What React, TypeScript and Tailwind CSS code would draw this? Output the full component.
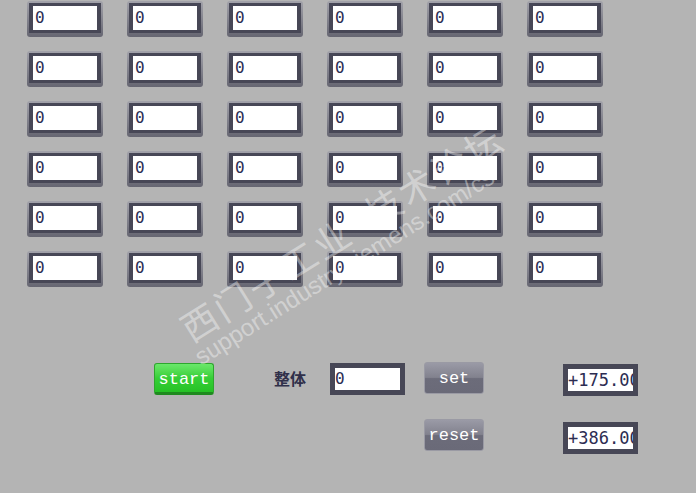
function Cell() {
  return (
    <div className="w-[76px] h-[36px] rounded-[3px] bg-gradient-to-b from-[#a2a2aa] to-[#666672] pt-[2px] px-[2px] pb-[4px]">
      <div className="h-full bg-[#474756] px-[4px] py-[3px]">
        <div className="h-full bg-white flex items-center pl-[2px] text-[16px] text-[#2c2c52] leading-none font-['DejaVu_Sans_Mono',monospace]">
          0
        </div>
      </div>
    </div>
  );
}

function GrayButton({ label }: { label: string }) {
  return (
    <button className="w-[60px] h-[32px] rounded-[3px] border border-[#9a9aa4] bg-[linear-gradient(#9a9aa6_0%,#82828e_48%,#6c6c7a_52%,#6a6a78_100%)] text-white text-[17px] leading-none font-['Liberation_Mono',monospace] flex items-center justify-center">
      {label}
    </button>
  );
}

function ValueBox({ value, size = "text-[16px]" }: { value: string; size?: string }) {
  return (
    <div className="w-[75px] h-[32px] bg-[#474756] p-[5px]">
      <div className={`h-full bg-white overflow-hidden whitespace-nowrap flex items-center ${size} text-[#2c2c52] leading-none font-['DejaVu_Sans_Mono',monospace]`}>
        {value}
      </div>
    </div>
  );
}

export default function App() {
  return (
    <div className="relative w-[696px] h-[493px] overflow-hidden bg-[#b4b4b4]">
      {/* Grid of inputs */}
      <div className="grid grid-cols-[repeat(6,76px)] gap-x-[24px] gap-y-[14px] pl-[27px] pt-[1px]">
        {Array.from({ length: 36 }).map((_, i) => (
          <Cell key={i} />
        ))}
      </div>

      {/* Controls */}
      <div className="flex items-start pl-[154px] pt-[75px]">
        <button className="mt-[1px] w-[60px] h-[32px] rounded-[3px] border border-[#2ea62e] border-b-[3px] border-b-[#1f8a1f] bg-gradient-to-b from-[#6ae86a] via-[#36cf36] to-[#26c226] text-white text-[17px] leading-none font-['Liberation_Mono',monospace] flex items-center justify-center pt-[2px]">
          start
        </button>
        <div className="ml-[60px] w-[56px] h-[32px] flex items-center text-[16px] font-bold text-[#30304a] font-['Noto_Sans_CJK_SC',sans-serif]">
          整体
        </div>
        <div className="mt-[1px]">
          <ValueBox value="0" />
        </div>
        <div className="ml-[19px] flex flex-col gap-[25px]">
          <GrayButton label="set" />
          <GrayButton label="reset" />
        </div>
        <div className="ml-[79px] mt-[2px] flex flex-col gap-[26px]">
          <ValueBox value="+175.00" size="text-[17px]" />
          <ValueBox value="+386.00" size="text-[17px]" />
        </div>
      </div>

      {/* Watermark */}
      <div className="absolute left-[183px] top-[312px] h-[36px] origin-left rotate-[-32deg] whitespace-pre text-[36px] leading-none tracking-[3px] text-white/40 font-['Noto_Sans_CJK_SC',sans-serif]">
        西门子工业  技术论坛
      </div>
      <div className="absolute left-[197px] top-[347px] h-[24px] origin-left rotate-[-32deg] whitespace-nowrap text-[24px] leading-none text-white/40 font-['Liberation_Sans',sans-serif]">
        support.industry.siemens.com/cs
      </div>
    </div>
  );
}
